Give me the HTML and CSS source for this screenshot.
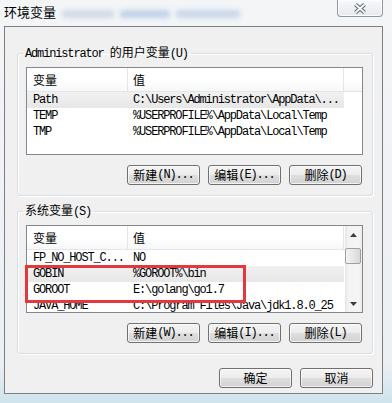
FILE: index.html
```html
<!DOCTYPE html>
<html lang="zh-CN">
<head>
<meta charset="utf-8">
<title>环境变量</title>
<link rel="stylesheet" href="styles.css">
</head>
<body>
<div class="screen">
  <div class="titlebar">
    <div class="title">环境变量</div>
    <div class="glass-blur" aria-hidden="true"><i class="b1"></i><i class="b2"></i><i class="b3"></i></div>
    <button class="close" aria-label="关闭">
      <svg width="14" height="11" viewBox="0 0 14 11"><path d="M2.5 1.5 L11.5 9.5 M11.5 1.5 L2.5 9.5" stroke="#5f6875" stroke-width="4" fill="none"/><path d="M2.5 1.5 L11.5 9.5 M11.5 1.5 L2.5 9.5" stroke="#f4f6f8" stroke-width="2" fill="none"/></svg>
    </button>
  </div>
  <div class="client">
    <fieldset class="group">
      <legend><span class="mono">Administrator </span>的用户变量<span class="mono">(U)</span></legend>
      <div class="listbox">
        <div class="lv">
          <div class="header"><div class="h1">变量</div><div class="h2">值</div></div>
          <div class="row sel"><div class="c1 mono">Path</div><div class="c2 mono">C:\Users\Administrator\AppData\...</div></div>
          <div class="row"><div class="c1 mono">TEMP</div><div class="c2 mono">%USERPROFILE%\AppData\Local\Temp</div></div>
          <div class="row"><div class="c1 mono">TMP</div><div class="c2 mono">%USERPROFILE%\AppData\Local\Temp</div></div>
        </div>
      </div>
      <div class="buttons">
        <button class="btn">新建<span class="mono">(N)...</span></button>
        <button class="btn">编辑<span class="mono">(E)...</span></button>
        <button class="btn">删除<span class="mono">(D)</span></button>
      </div>
    </fieldset>
    <fieldset class="group second">
      <legend>系统变量<span class="mono">(S)</span></legend>
      <div class="annotated">
        <div class="listbox">
          <div class="lv">
            <div class="header"><div class="h1">变量</div><div class="h2">值</div></div>
            <div class="row"><div class="c1 mono">FP_NO_HOST_C...</div><div class="c2 mono">NO</div></div>
            <div class="row sel"><div class="c1 mono">GOBIN</div><div class="c2 mono">%GOROOT%\bin</div></div>
            <div class="row"><div class="c1 mono">GOROOT</div><div class="c2 mono">E:\golang\go1.7</div></div>
            <div class="row"><div class="c1 mono">JAVA_HOME</div><div class="c2 mono">C:\Program Files\Java\jdk1.8.0_25</div></div>
          </div>
          <div class="scrollbar">
            <div class="sb-btn"><svg width="7" height="4" viewBox="0 0 7 4"><path d="M0 4 L3.5 0 L7 4 Z" fill="#3c3c3c"/></svg></div>
            <div class="sb-track"><div class="thumb"></div></div>
            <div class="sb-btn"><svg width="7" height="4" viewBox="0 0 7 4"><path d="M0 0 L7 0 L3.5 4 Z" fill="#3c3c3c"/></svg></div>
          </div>
        </div>
        <div class="redbox"></div>
      </div>
      <div class="buttons">
        <button class="btn">新建<span class="mono">(W)...</span></button>
        <button class="btn">编辑<span class="mono">(I)...</span></button>
        <button class="btn">删除<span class="mono">(L)</span></button>
      </div>
    </fieldset>
    <div class="dialog-buttons">
      <button class="btn">确定</button>
      <button class="btn">取消</button>
    </div>
  </div>
</div>
</body>
</html>
```
FILE: styles.css
```css
body {
  margin: 0;
}

.screen {
  width: 392px;
  height: 403px;
  overflow: hidden;
  background:
    linear-gradient(to top, rgba(150, 205, 225, 0.35), rgba(150, 205, 225, 0) 40px),
    linear-gradient(#f3f5f7, #eceff2);
  font-family: "Noto Sans CJK SC", sans-serif;
  font-size: 12px;
  color: #000;
}

.titlebar {
  height: 26px;
  display: flex;
  align-items: flex-start;
}

.title {
  padding: 5px 0 0 4px;
  font-size: 13px;
  line-height: 14px;
}

.glass-blur {
  display: flex;
  gap: 6px;
  margin: 10px 0 0 6px;
  filter: blur(2.5px);
  opacity: 0.5;
}

.glass-blur i {
  display: block;
  height: 8px;
  border-radius: 3px;
}

.glass-blur .b1 { width: 52px; background: #b4c2d4; }
.glass-blur .b2 { width: 50px; background: #8fb0dc; }
.glass-blur .b3 { width: 64px; background: #9fbbe0; }

.close {
  margin: 0 9px 0 auto;
  width: 46px;
  height: 17px;
  padding: 0;
  border: 1px solid #8d98a6;
  border-top: none;
  border-radius: 0 0 4px 4px;
  background: linear-gradient(#f7f8fa, #e6e9ee);
  box-shadow: inset 0 0 0 1px rgba(255, 255, 255, 0.8);
  display: flex;
  align-items: center;
  justify-content: center;
}

.client {
  margin-left: 4px;
  width: 379px;
  height: 368px;
  box-sizing: border-box;
  border: 1px solid #7b7f85;
  background: #f0f0f0;
  padding-top: 18px;
  display: flex;
  flex-direction: column;
}

.mono {
  font-family: "Liberation Mono", monospace;
  font-size: 12px;
  letter-spacing: -1.15px;
}

.group {
  margin: 0 9px 0 12px;
  padding: 0 9px 10px 8px;
  border: 1px solid #d5dfe5;
  border-radius: 3px;
  box-shadow: inset 1px 1px 0 #fff, 1px 1px 0 #fff;
  min-width: 0;
}

.group.second {
  margin-top: 7px;
}

.group legend {
  margin-left: -3px;
  padding: 0 3px 0 2px;
  font-size: 12px;
  line-height: 14px;
}

.annotated {
  position: relative;
}

.listbox {
  margin-top: 6px;
  height: 88px;
  box-sizing: border-box;
  border: 1px solid #828790;
  background: #fff;
  display: flex;
  overflow: hidden;
}

.lv {
  flex: 1;
  min-width: 0;
  overflow: hidden;
}

.header {
  display: flex;
  height: 24px;
  box-sizing: border-box;
  border-bottom: 1px solid #e5e5e5;
  background: linear-gradient(#ffffff 55%, #f6f7f8);
  line-height: 23px;
  font-size: 12px;
}

.h1 {
  width: 101px;
  box-sizing: border-box;
  padding-left: 6px;
  border-right: 1px solid #e5e5e5;
}

.h2 {
  width: 216px;
  box-sizing: border-box;
  padding-left: 5px;
  border-right: 1px solid #e5e5e5;
}

.row {
  display: flex;
  width: 317px;
  height: 16px;
  line-height: 16px;
  white-space: nowrap;
}

.row.sel {
  background: linear-gradient(#f1f1f1, #e7e7e7);
}

.c1 {
  width: 101px;
  box-sizing: border-box;
  padding-left: 6px;
  overflow: hidden;
}

.c2 {
  width: 216px;
  box-sizing: border-box;
  padding-left: 5px;
  overflow: hidden;
}

.scrollbar {
  width: 17px;
  display: flex;
  flex-direction: column;
  background: linear-gradient(to right, #e4e4e4, #f3f3f3 3px, #f5f5f5 14px, #ebebeb);
}

.sb-btn {
  height: 17px;
  display: flex;
  align-items: center;
  justify-content: center;
}

.sb-track {
  flex: 1;
  padding-top: 5px;
}

.thumb {
  height: 16px;
  width: 16px;
  box-sizing: border-box;
  border: 1px solid #a0a0a0;
  border-radius: 2px;
  background: linear-gradient(to right, #f4f4f4, #e6e6e6 50%, #d8d8d8);
}

.redbox {
  position: absolute;
  left: -1px;
  top: 40px;
  width: 221px;
  height: 38px;
  box-sizing: border-box;
  border: 3px solid #e2383e;
}

.buttons {
  margin-top: 10px;
  display: flex;
  justify-content: flex-end;
  gap: 8px;
  padding-right: 1px;
}

.dialog-buttons {
  margin-top: 14px;
  padding-right: 9px;
  display: flex;
  justify-content: flex-end;
  gap: 8px;
}

.btn {
  width: 73px;
  height: 20px;
  box-sizing: border-box;
  padding: 0;
  border: 1px solid #707070;
  border-radius: 3px;
  background: linear-gradient(#f4f4f4, #ececec 48%, #dedede 52%, #d2d2d2);
  box-shadow: inset 0 0 0 1px rgba(255, 255, 255, 0.7);
  font-family: "Noto Sans CJK SC", sans-serif;
  font-size: 12px;
  line-height: 18px;
  color: #000;
  display: flex;
  align-items: center;
  justify-content: center;
}
```
